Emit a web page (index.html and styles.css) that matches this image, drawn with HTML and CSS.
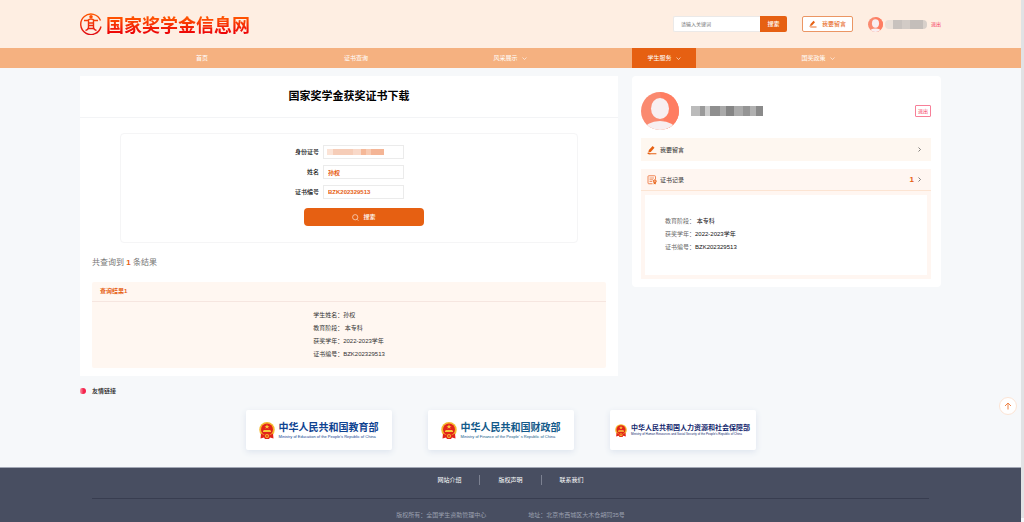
FILE: index.html
```
<!DOCTYPE html>
<html lang="zh-CN">
<head>
    <meta charset="UTF-8">
    <meta name="viewport" content="width=device-width, initial-scale=1.0">
    <title>国家奖学金信息网</title>
    <link rel="stylesheet" href="styles.css">
</head>
<body>
    <svg class="sprite" aria-hidden="true">
        <defs>
            <linearGradient id="red" gradientUnits="userSpaceOnUse" x1="0" y1="0" x2="0" y2="44">
                <stop offset="0" stop-color="#ff5a00"/>
                <stop offset="1" stop-color="#e00a14"/>
            </linearGradient>
        </defs>
        <symbol id="avatar" viewBox="0 0 38 38">
            <clipPath id="round"><circle cx="19" cy="19" r="19"/></clipPath>
            <g clip-path="url(#round)">
                <rect width="38" height="38" fill="#fa8a70"/>
                <path d="M19 0 L38 4 V38 H24 Z" fill="#ff7d61"/>
                <ellipse cx="19" cy="38" rx="16" ry="9" fill="#f8eff1"/>
                <ellipse cx="19" cy="16.500" rx="9" ry="10.500" fill="#f8eff1"/>
            </g>
        </symbol>
        <symbol id="pen" viewBox="0 0 16 16">
            <path d="M2 12 L3 8 L9 1.500 L12 4.500 L6 11 Z" fill="#e66012"/>
            <path d="M1 12.500 Q3 14.500 6 14 H15" fill="none" stroke="#e66012" stroke-width="1.800"/>
        </symbol>
        <symbol id="cert" viewBox="0 0 20 20">
            <path d="M17 9 V3 Q17 1.500 15.500 1.500 H3.500 Q2 1.500 2 3 V16 Q2 17.500 3.500 17.500 H11" fill="none" stroke="#ee7b45" stroke-width="1.800"/>
            <path d="M5 6 H14 M5 9.500 H12 M5 13 H10" stroke="#ee7b45" stroke-width="1.600"/>
            <circle cx="15.500" cy="12.500" r="3" fill="#f6a27a" stroke="#e66012" stroke-width="1.500"/>
            <path d="M13.500 15 V19 L15.500 17.500 L17.500 19 V15" fill="#e66012"/>
        </symbol>
        <symbol id="down" viewBox="0 0 10 10">
            <path d="M1 3 L5 7 L9 3" fill="none" stroke="currentColor" stroke-width="1.200"/>
        </symbol>
        <symbol id="right" viewBox="0 0 10 10">
            <path d="M3 1 L7 5 L3 9" fill="none" stroke="currentColor" stroke-width="1.200"/>
        </symbol>
        <symbol id="emblem" viewBox="0 0 32 34">
            <circle cx="16" cy="15.500" r="15.500" fill="#f4b92e"/>
            <circle cx="16" cy="15" r="12" fill="#e2231a"/>
            <path d="M16 4.500 L17.300 8 H21 L18 10.200 L19.200 13.700 L16 11.500 L12.800 13.700 L14 10.200 L11 8 H14.700 Z" fill="#f9c83c"/>
            <path d="M8 20 H24 V18 L22 16 H10 L8 18 Z" fill="#f9c83c"/>
            <path d="M4 23 Q16 31 28 23 L29 33 L22 31 L20 34 H12 L10 31 L3 33 Z" fill="#e2231a"/>
            <circle cx="16" cy="28" r="4" fill="#f4b92e"/>
            <circle cx="16" cy="28" r="1.800" fill="#e2231a"/>
        </symbol>
    </svg>

    <div class="page">
        <header class="header">
            <a class="logo" href="#">
                <svg class="logo-icon" viewBox="0 0 44 44" fill="none" stroke="url(#red)" stroke-width="2.800">
                    <path d="M41 15 A20.500 20.500 0 1 0 42 27"/>
                    <circle cx="22" cy="7.500" r="3.500" fill="#ff4c00" stroke="none"/>
                    <path d="M8 15 H15 Q18 12 22 12 Q26 12 29 15 H36"/>
                    <path d="M17 14 V29 Q16 34 11 35 M27 14 V29 Q28 34 33 35"/>
                    <path d="M17 20 H27 M17 25 H27 M16 31 H28"/>
                </svg>
                <span class="logo-text">国家奖学金信息网</span>
            </a>
            <form class="search">
                <input class="search-input" type="text" placeholder="请输入关键词" aria-label="请输入关键词">
                <button class="search-button" type="button">搜索</button>
            </form>
            <button class="message-button" type="button">
                <svg class="icon"><use href="#pen"/></svg>我要留言
            </button>
            <div class="user">
                <svg class="user-avatar"><use href="#avatar"/></svg>
                <span class="user-name"></span>
                <a class="user-logout" href="#">退出</a>
            </div>
        </header>

        <nav class="nav">
            <a class="nav-item" href="#">首页</a>
            <a class="nav-item" href="#">证书查询</a>
            <a class="nav-item" href="#">风采展示<svg class="arrow"><use href="#down"/></svg></a>
            <a class="nav-item active" href="#">学生服务<svg class="arrow"><use href="#down"/></svg></a>
            <a class="nav-item" href="#">国奖政策<svg class="arrow"><use href="#down"/></svg></a>
        </nav>

        <main class="content">
            <section class="panel download">
                <h1 class="title">国家奖学金获奖证书下载</h1>
                <div class="form-box">
                    <form class="form">
                        <div class="form-row">
                            <label for="idcard">身份证号</label>
                            <input class="masked" id="idcard" type="text">
                        </div>
                        <div class="form-row">
                            <label for="name">姓名</label>
                            <input id="name" type="text" value="孙权">
                        </div>
                        <div class="form-row">
                            <label for="number">证书编号</label>
                            <input id="number" type="text" value="BZK202329513">
                        </div>
                        <button class="submit" type="button">
                            <svg class="submit-icon" viewBox="0 0 12 12" fill="none" stroke="#fff">
                                <circle cx="5.500" cy="5.500" r="4.500"/>
                                <path d="M8.500 9 L11 11.500"/>
                            </svg>搜索
                        </button>
                    </form>
                </div>
                <p class="count">共查询到 <b>1</b> 条结果</p>
                <div class="result">
                    <h2 class="result-title">查询结果1</h2>
                    <ul class="result-list">
                        <li>学生姓名：孙权</li>
                        <li>教育阶段：&nbsp;本专科</li>
                        <li>获奖学年：2022-2023学年</li>
                        <li>证书编号：BZK202329513</li>
                    </ul>
                </div>
            </section>

            <aside class="panel profile">
                <div class="profile-head">
                    <svg class="profile-avatar"><use href="#avatar"/></svg>
                    <span class="profile-name"></span>
                    <button class="profile-logout" type="button">退出</button>
                </div>
                <a class="profile-row" href="#">
                    <svg class="profile-icon"><use href="#pen"/></svg>
                    <span>我要留言</span>
                    <svg class="arrow end"><use href="#right"/></svg>
                </a>
                <div class="record">
                    <a class="record-head" href="#">
                        <svg class="profile-icon"><use href="#cert"/></svg>
                        <span>证书记录</span>
                        <b class="record-count end">1</b>
                        <svg class="arrow"><use href="#right"/></svg>
                    </a>
                    <ul class="record-list">
                        <li>教育阶段：<span>&nbsp;本专科</span></li>
                        <li>获奖学年：<span>2022-2023学年</span></li>
                        <li>证书编号：<span>BZK202329513</span></li>
                    </ul>
                </div>
            </aside>
        </main>

        <section class="links">
            <h2 class="links-title">友情链接</h2>
            <div class="links-list">
                <a class="link-card moe" href="#">
                    <svg class="emblem"><use href="#emblem"/></svg>
                    <span class="link-text">
                        <strong>中华人民共和国教育部</strong>
                        <small>Ministry of Education of the People's Republic of China</small>
                    </span>
                </a>
                <a class="link-card mof" href="#">
                    <svg class="emblem"><use href="#emblem"/></svg>
                    <span class="link-text">
                        <strong>中华人民共和国财政部</strong>
                        <small>Ministry of Finance of the People' s Republic of China</small>
                    </span>
                </a>
                <a class="link-card mohrss" href="#">
                    <svg class="emblem"><use href="#emblem"/></svg>
                    <span class="link-text">
                        <strong>中华人民共和国人力资源和社会保障部</strong>
                        <small>Ministry of Human Resources and Social Security of the People's Republic of China</small>
                    </span>
                </a>
            </div>
        </section>

        <footer class="footer">
            <div class="footer-nav">
                <a href="#">网站介绍</a>
                <a href="#">版权声明</a>
                <a href="#">联系我们</a>
            </div>
            <div class="footer-info">
                <span>版权所有：全国学生资助管理中心</span>
                <span>地址：北京市西城区大木仓胡同35号</span>
            </div>
        </footer>
    </div>

    <div class="scrollbar"></div>

    <button class="back-top" type="button" aria-label="返回顶部">
        <svg class="back-icon" viewBox="0 0 16 16" fill="none" stroke="#ee8448" stroke-width="2">
            <path d="M8 15 V2 M2 8 L8 2 L14 8"/>
        </svg>
    </button>
</body>
</html>
```
FILE: styles.css
```
* {
    box-sizing: border-box;
}

body {
    display: flex;
    min-height: 100vh;
    margin: 0;
    background-color: #f6f8fa;
    color: #333;
    font-family: "Liberation Sans", "Noto Sans CJK SC", sans-serif;
    font-size: 6px;
    line-height: 10px;
}

a {
    color: inherit;
    text-decoration: none;
}

h1, h2, p, ul {
    margin: 0;
    padding: 0;
}

ul {
    list-style: none;
}

button, input {
    margin: 0;
    padding: 0;
    border: none;
    font-family: inherit;
    font-size: 6px;
    line-height: 10px;
}

button {
    cursor: pointer;
}

.sprite {
    position: absolute;
    width: 0;
    height: 0;
}

.page {
    flex: 1;
    display: flex;
    flex-direction: column;
}

.scrollbar {
    width: 3px;
    margin-bottom: 4px;
    background-color: #e1e2e4;
}

.icon {
    width: 8px;
    height: 8px;
}

.arrow {
    width: 5px;
    height: 5px;
}

.end {
    margin-left: auto;
}

/* header */
.header {
    display: flex;
    align-items: center;
    height: 48px;
    padding: 0 80px;
    background-color: #feeee2;
}

.logo {
    display: flex;
    align-items: center;
    gap: 4px;
    margin-right: auto;
}

.logo-icon {
    width: 22px;
    height: 22px;
}

.logo-text {
    padding-top: 3px;
    font-size: 18px;
    font-weight: bold;
    line-height: 24px;
    background: linear-gradient(#ff5200 25%, #ec0008 85%);
    -webkit-background-clip: text;
    background-clip: text;
    color: transparent;
}

.search {
    display: flex;
    height: 16px;
    margin-right: 15px;
}

.search-input {
    width: 87px;
    padding: 0 7px;
    border: 1px solid #ebe9e8;
    border-right: none;
    border-radius: 2px 0 0 2px;
    background-color: #fff;
    font-size: 5px;
}

.search-input::placeholder {
    color: #777;
}

.search-button {
    width: 27px;
    border-radius: 0 2px 2px 0;
    background-color: #e66012;
    color: #fff;
    font-weight: 500;
}

.message-button {
    display: flex;
    align-items: center;
    justify-content: center;
    gap: 5px;
    width: 51px;
    height: 16px;
    margin-right: 15px;
    border: 1px solid #eb9664;
    border-radius: 2px;
    background-color: #fff;
    color: #e66012;
}

.user {
    display: flex;
    align-items: center;
}

.user-avatar {
    width: 15px;
    height: 15px;
    margin-right: 2px;
}

.user-name {
    width: 42px;
    height: 9px;
    margin-right: 4px;
    border-radius: 4px;
    background: linear-gradient(90deg, #eae0d8 20%, #c8c2be 20% 40%, #d2cbc6 40% 60%, #c4beba 60% 90%, #d8d0ca 90%);
}

.user-logout {
    color: #f5365c;
    font-size: 5px;
}

/* nav */
.nav {
    display: grid;
    grid-template-columns: repeat(5, 1fr);
    justify-items: center;
    height: 20px;
    padding: 0 126px 0 125px;
    background-color: #f5b180;
    color: #fff;
}

.nav-item {
    display: flex;
    align-items: center;
    justify-content: center;
    gap: 4px;
    width: 64px;
}

.nav-item.active {
    background-color: #e66012;
}

/* content */
.content {
    display: grid;
    grid-template-columns: 538fr 309fr;
    align-items: start;
    gap: 14px;
    padding: 8px 80px 0;
}

.panel {
    background-color: #fff;
}

.download {
    padding-bottom: 8px;
}

.title {
    border-bottom: 1px solid #f3f4f6;
    font-size: 11px;
    line-height: 41px;
    text-align: center;
    color: #000;
}

.form-box {
    display: flex;
    justify-content: center;
    margin: 15px 40px 0;
    padding: 11px 0 16px;
    border: 1px solid #f5f5f6;
    border-radius: 4px;
}

.form {
    display: flex;
    flex-direction: column;
    gap: 6px;
    width: 150px;
}

.form-row {
    display: flex;
    align-items: center;
    gap: 4px;
}

.form-row label {
    width: 45px;
    text-align: right;
    font-weight: 500;
    color: #111;
}

.form-row input {
    width: 81px;
    height: 14px;
    padding: 0 4px;
    border: 1px solid #ebebeb;
    background-color: #fff;
    color: #e66012;
    font-weight: bold;
}

/* hidden id number */
.form-row .masked {
    background: linear-gradient(90deg, #fbe3d6 10%, #f6cdb8 10% 45%, #f9d9c9 45% 60%, #f5b898 60% 68%, #f8cbb3 68% 78%, #f4b596 78%) no-repeat 3px 3px / 57px 6px #fff;
}

.submit {
    display: flex;
    align-items: center;
    justify-content: center;
    gap: 4px;
    align-self: flex-end;
    width: 120px;
    height: 18px;
    margin-top: 3px;
    border-radius: 4px;
    background-color: #e66012;
    color: #fff;
    font-weight: 500;
}

.submit-icon {
    width: 7px;
    height: 7px;
}

.count {
    margin: 14px 12px 13px;
    font-size: 8px;
    line-height: 12px;
    color: #777;
}

.count b {
    color: #e66012;
}

.result {
    margin: 0 12px;
    border-radius: 2px;
    background-color: #fff7f1;
}

.result-title {
    padding: 0 8px;
    border-bottom: 1px solid #f6e6e0;
    font-size: 6px;
    line-height: 19px;
    color: #e66012;
}

.result-list {
    width: fit-content;
    margin: 0 auto;
    padding: 7px 0;
    line-height: 13px;
}

/* profile */
.profile {
    padding: 16px 10px 8px 9px;
    border-radius: 4px;
}

.profile-head {
    display: flex;
    align-items: center;
    gap: 12px;
    margin-bottom: 8px;
}

.profile-avatar {
    width: 38px;
    height: 38px;
}

.profile-name {
    width: 72px;
    height: 10px;
    background: linear-gradient(90deg, #bbb 12%, #999 12% 20%, #ccc 20% 27%, #8f8f8f 27% 40%, #a9a9a9 40% 48%, #858585 48% 60%, #aaa 60% 72%, #949494 72% 82%, #b0b0b0 82% 90%, #8a8a8a 90%);
}

.profile-logout {
    width: 16px;
    height: 12px;
    margin-left: auto;
    border: 1px solid #f77f98;
    border-radius: 1px;
    background-color: #fff;
    color: #f5365c;
    font-size: 5px;
}

.profile-row,
.record-head {
    display: flex;
    align-items: center;
    gap: 3px;
    padding: 0 9px 0 6px;
}

.profile-row {
    height: 23px;
    margin-bottom: 8px;
    background-color: #fef7f0;
}

.profile-icon {
    width: 10px;
    height: 10px;
}

.record {
    padding-bottom: 4px;
    background-color: #fff6f1;
}

.record-head {
    height: 22px;
    border-bottom: 1px solid #fce4d2;
}

.record-count {
    font-size: 8px;
    color: #e66012;
}

.record-list {
    margin: 4px 4px 0;
    padding: 20px 20px 21px;
    background-color: #fff;
    line-height: 13px;
    color: #666;
}

.record-list span {
    color: #111;
}

/* friend links */
.links {
    padding: 10px 80px 17px;
}

.links-title {
    display: flex;
    align-items: center;
    gap: 6px;
    font-size: 6px;
    font-weight: 500;
    color: #111;
}

.links-title::before {
    content: "";
    width: 6px;
    height: 6px;
    border-radius: 2px 3px 3px 2px;
    background: linear-gradient(90deg, #f99aa8, #f5234c 60%);
}

.links-list {
    display: flex;
    justify-content: center;
    gap: 36px;
    margin-top: 14px;
    padding-right: 20px;
}

.link-card {
    display: flex;
    align-items: center;
    justify-content: center;
    gap: 4px;
    width: 146px;
    height: 40px;
    border-radius: 2px;
    background-color: #fff;
    box-shadow: 0 2px 6px #dde4ee;
}

.emblem {
    width: 16px;
    height: 17px;
}

.link-text {
    display: flex;
    flex-direction: column;
    white-space: nowrap;
}

.link-text strong {
    font-size: 10px;
    line-height: 12px;
}

.link-text small {
    font-size: 4px;
    line-height: 5px;
}

.moe {
    color: #0f4391;
}

.mof {
    color: #135a8a;
}

.mohrss {
    color: #14286e;
}

.mohrss .emblem {
    width: 12px;
    height: 13px;
}

.mohrss strong {
    font-size: 7px;
    line-height: 9px;
}

.mohrss small {
    font-size: 3px;
}

/* footer */
.footer {
    flex: 1;
    padding: 0 92px;
    border-top: 1px solid #a3a8b5;
    background-color: #484e61;
}

.footer-nav {
    display: flex;
    justify-content: center;
    padding: 7px 0 13px;
    border-bottom: 1px solid #383d50;
    color: #fff;
}

.footer-nav a {
    padding: 0 18px;
}

.footer-nav a + a {
    border-left: 1px solid #7c8191;
}

.footer-info {
    display: flex;
    justify-content: center;
    gap: 42px;
    padding-top: 11px;
    color: #9ba0b0;
}

/* back to top */
.back-top {
    position: fixed;
    right: 7px;
    bottom: 107px;
    display: flex;
    align-items: center;
    justify-content: center;
    width: 18px;
    height: 18px;
    border: 1px solid #fbe3d3;
    border-radius: 50%;
    background-color: #fff;
}

.back-icon {
    width: 8px;
    height: 8px;
}
```
